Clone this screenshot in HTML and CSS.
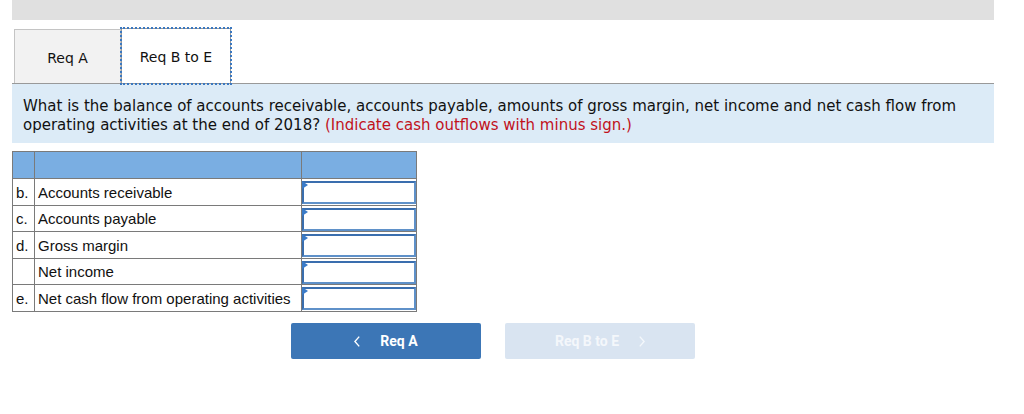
FILE: index.html
```html
<!DOCTYPE html>
<html>
<head>
<meta charset="utf-8">
<link rel="stylesheet" href="styles.css">
</head>
<body>
<div class="page">
  <div class="topbar"></div>
  <div class="tabs">
    <div class="tab tab-inactive">Req A</div>
    <div class="tab tab-active">Req B to E</div>
  </div>
  <div class="question">What is the balance of accounts receivable, accounts payable, amounts of gross margin, net income and net cash flow from operating activities at the end of 2018? <span class="hint">(Indicate cash outflows with minus sign.)</span></div>
  <table class="grid">
    <colgroup><col class="w-let"><col class="w-lab"><col class="w-inp"></colgroup>
    <tr class="head"><td></td><td></td><td></td></tr>
    <tr class="r-a"><td class="c-let">b.</td><td class="c-lab">Accounts receivable</td><td class="c-inp"><div class="box"></div></td></tr>
    <tr class="r-b"><td class="c-let">c.</td><td class="c-lab">Accounts payable</td><td class="c-inp"><div class="box"></div></td></tr>
    <tr class="r-a"><td class="c-let">d.</td><td class="c-lab">Gross margin</td><td class="c-inp"><div class="box"></div></td></tr>
    <tr class="r-b"><td class="c-let"></td><td class="c-lab">Net income</td><td class="c-inp"><div class="box"></div></td></tr>
    <tr class="r-a"><td class="c-let">e.</td><td class="c-lab">Net cash flow from operating activities</td><td class="c-inp"><div class="box"></div></td></tr>
  </table>
  <div class="nav">
    <div class="btn btn-prev">
      <svg class="chev" width="6" height="11" viewBox="0 0 6 11"><path d="M5.2 0.6 L0.9 5.5 L5.2 10.4" fill="none" stroke="#fff" stroke-width="1.4"/></svg>
      <span>Req A</span>
    </div>
    <div class="btn btn-next">
      <span>Req B to E</span>
      <svg class="chev" width="6" height="11" viewBox="0 0 6 11"><path d="M0.8 0.6 L5.1 5.5 L0.8 10.4" fill="none" stroke="#f4f7fb" stroke-width="1.4"/></svg>
    </div>
  </div>
</div>
</body>
</html>
```
FILE: styles.css
```css
body {
  margin: 0;
  background: #fff;
  font-family: "DejaVu Sans", Verdana, sans-serif;
}
.page {
  width: 982px;
  margin-left: 12px;
}
.topbar {
  height: 20px;
  background: #e0e0e0;
}
.tabs {
  display: flex;
  align-items: flex-end;
  margin-top: 8px;
  padding-left: 2px;
  border-bottom: 1px solid #999;
  height: 55px;
}
.tab {
  box-sizing: border-box;
  display: flex;
  align-items: center;
  justify-content: center;
  font-size: 14px;
  color: #111;
  padding-top: 2px;
}
.tab-inactive {
  width: 107px;
  height: 54px;
  background: #f2f2f2;
  border: 1px solid #c4c4c4;
  border-bottom: none;
}
.tab-active {
  width: 110px;
  height: 56px;
  background: #fff;
  border: 1px solid #999;
  outline: 2px dotted #3b78c0;
  outline-offset: -1px;
  margin-bottom: -1px;
}
.question {
  background: #dcebf7;
  padding: 13px 11px 9px 11px;
  font-size: 15px;
  line-height: 19px;
  color: #111;
  height: 37px;
}
.hint {
  color: #c1121c;
}
.grid {
  margin-top: 8px;
  border-collapse: collapse;
  table-layout: fixed;
  width: 404px;
  font-family: "Liberation Sans", Arial, sans-serif;
  font-size: 15px;
  color: #111;
}
.w-let { width: 22px; }
.w-lab { width: 267px; }
.w-inp { width: 115px; }
.grid td {
  border: 1px solid #7a7a7a;
  padding: 0;
}
.grid .head td {
  background: #7aaee2;
  height: 26px;
}
.r-a td { height: 26px; }
.r-b td { height: 25px; }
.c-let {
  padding-left: 3px !important;
  white-space: nowrap;
}
.c-lab {
  padding-left: 3px !important;
  white-space: nowrap;
}
.box {
  position: relative;
  box-sizing: border-box;
  height: 23px;
  margin: 1px 0 0 0;
  border: 2px solid #3f72b0;
  border-color: #3a6eae #5f91c9 #5f91c9 #3a6eae;
}
.box::before {
  content: "";
  position: absolute;
  left: -2px;
  top: -2px;
  border-left: 6px solid #3a7bc8;
  border-top: 4px solid transparent;
  border-bottom: 4px solid transparent;
}
.nav {
  display: flex;
  gap: 24px;
  margin-top: 11px;
  margin-left: 279px;
}
.btn {
  box-sizing: border-box;
  width: 190px;
  height: 36px;
  border-radius: 2px;
  display: flex;
  align-items: center;
  justify-content: center;
  gap: 20px;
  font-family: Roboto, "Liberation Sans", sans-serif;
  font-weight: bold;
  font-size: 14px;
  color: #fff;
}
.btn-prev {
  background: #3c76b6;
}
.btn-next {
  background: #d9e4f1;
  color: #f4f7fb;
}
.chev {
  display: block;
}
```
